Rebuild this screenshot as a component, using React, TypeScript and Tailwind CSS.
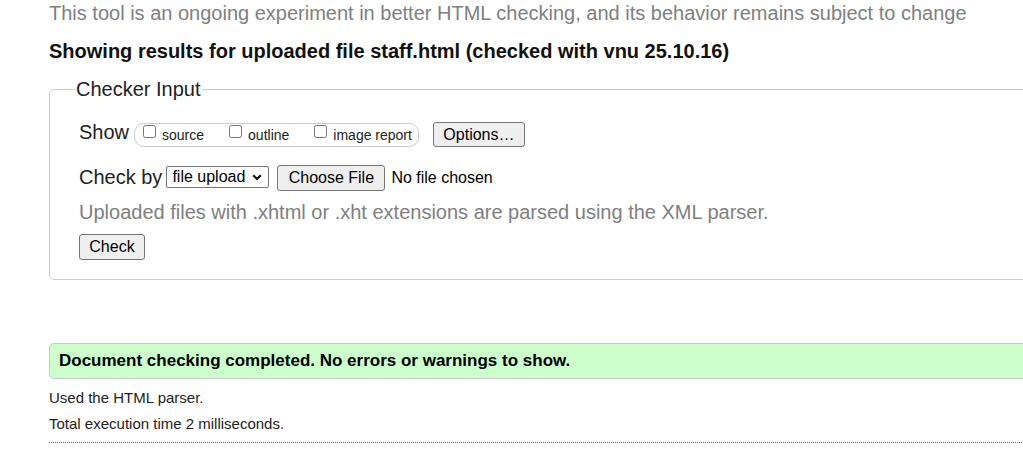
export default function App() {
  const btn =
    "bg-[#efefef] border border-[#767676] rounded-[3px] text-[16px] leading-[18px] text-black flex items-center justify-center";
  return (
    <div className="w-[1023px] h-[456px] overflow-hidden bg-white text-[#222] font-['Liberation_Sans',Arial,sans-serif]">
      <div className="w-[1200px] pl-[49px]">
        <p className="mt-[2px] text-[20px] leading-[23px] text-[#808080] whitespace-nowrap">
          This tool is an ongoing experiment in better HTML checking, and its behavior remains subject to change
        </p>
        <h2 className="mt-[15px] text-[20px] leading-[23px] font-bold text-[#111] whitespace-nowrap">
          Showing results for uploaded file staff.html (checked with vnu 25.10.16)
        </h2>
        <fieldset className="mt-[15px] border border-[#cccccc] rounded-[5px] pl-[25px] pt-[21px] pb-[19px]">
          <legend className="px-[1px] text-[20px] leading-[23px] text-[#222]">Checker Input</legend>
          <div className="pl-[4px]">
            <div className="flex items-start h-[25px]">
              <span className="-mt-[1px] text-[20px] leading-[23px]">Show</span>
              <div className="ml-[5px] mt-[1px] h-[24px] flex items-start border border-[#cccccc] rounded-[10px] pl-[8px] pr-[6px] gap-[25px]">
                <label className="flex items-start">
                  <input type="checkbox" className="mt-[1px] w-[13px] h-[13px]" />
                  <span className="ml-[6px] mt-[3px] text-[14px] leading-[16px]">source</span>
                </label>
                <label className="flex items-start">
                  <input type="checkbox" className="mt-[1px] w-[13px] h-[13px]" />
                  <span className="ml-[6px] mt-[3px] text-[14px] leading-[16px]">outline</span>
                </label>
                <label className="flex items-start">
                  <input type="checkbox" className="mt-[1px] w-[13px] h-[13px]" />
                  <span className="ml-[6px] mt-[3px] text-[14px] leading-[16px]">image report</span>
                </label>
              </div>
              <button className={`ml-[14px] h-[25px] w-[92px] ${btn}`}>Options…</button>
            </div>
            <div className="mt-[18px] flex items-start h-[26px]">
              <span className="mt-[1px] text-[20px] leading-[23px]">Check by</span>
              <div className="ml-[4px] mt-[1px] h-[22px] w-[103px] flex items-center justify-between border border-[#767676] rounded-[2px] pl-[5px] pr-[6px] text-[16px] leading-[18px] text-black">
                <span>file upload</span>
                <svg width="10" height="7" viewBox="0 0 10 7" className="mt-[1px]">
                  <path d="M1.2 1.2 L5 5 L8.8 1.2" fill="none" stroke="#111" strokeWidth="2.2" />
                </svg>
              </div>
              <button className={`ml-[8px] h-[26px] w-[108px] rounded-[2px] ${btn}`}>Choose File</button>
              <span className="ml-[6px] mt-[4px] text-[16px] leading-[18px] text-black">No file chosen</span>
            </div>
            <p className="mt-[10px] text-[20px] leading-[23px] text-[#808080] whitespace-nowrap">
              Uploaded files with .xhtml or .xht extensions are parsed using the XML parser.
            </p>
            <button className={`mt-[10px] h-[26px] w-[66px] ${btn}`}>Check</button>
          </div>
        </fieldset>
        <div className="mt-[63px] border border-[#c8c8c8] rounded-[5px] bg-[#ccffcc] px-[9px] py-[7px] text-[17px] leading-[20px] font-bold text-black whitespace-nowrap">
          Document checking completed. No errors or warnings to show.
        </div>
        <p className="mt-[10px] text-[15px] leading-[17px] text-[#222]">Used the HTML parser.</p>
        <p className="mt-[9px] text-[15px] leading-[17px] text-[#222]">Total execution time 2 milliseconds.</p>
        <div className="mt-[10px] border-t border-dotted border-[#666]" />
      </div>
    </div>
  );
}
